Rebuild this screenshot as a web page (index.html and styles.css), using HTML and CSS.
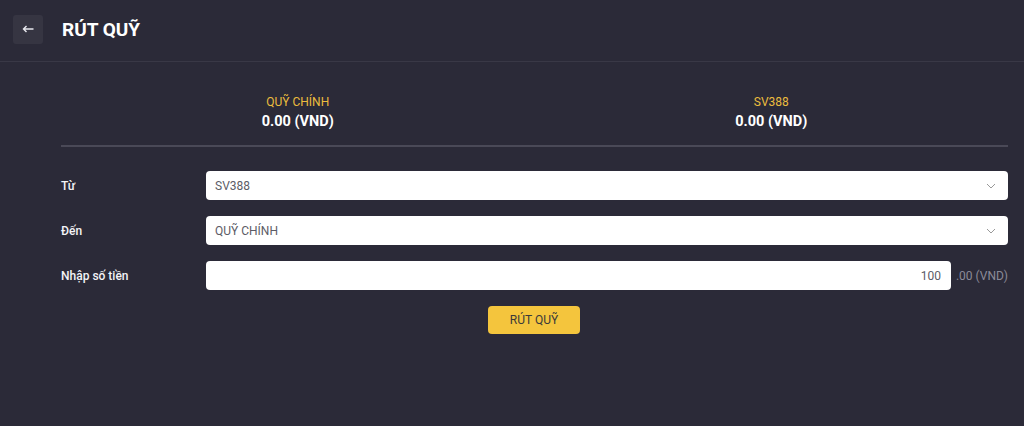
FILE: index.html
```html
<!DOCTYPE html>
<html>
<head>
   <meta charset="UTF-8">
   <title>Rút quỹ</title>
   <link rel="stylesheet" href="styles.css">
</head>
<body>
   <div class="header">
      <button class="back-button">
         <svg width="12" height="8" viewBox="0 0 12 8"><path d="M11.5 4H1.5M4.5 1L1.5 4l3 3" fill="none" stroke="#e8e8ee" stroke-width="1.4"/></svg>
      </button>
      <h1>RÚT QUỸ</h1>
   </div>
   <div class="container">
      <div class="wallets">
         <div class="wallet">
            <div class="wallet-name">QUỸ CHÍNH</div>
            <div class="wallet-amount">0.00 (VND)</div>
         </div>
         <div class="wallet">
            <div class="wallet-name">SV388</div>
            <div class="wallet-amount">0.00 (VND)</div>
         </div>
      </div>
      <div class="form">
         <div class="form-row">
            <label for="tu">Từ</label>
            <div class="select-box" id="tu">
               <span>SV388</span>
               <svg width="10" height="6" viewBox="0 0 10 6"><path d="M1 1l4 4 4-4" fill="none" stroke="#999" stroke-width="1"/></svg>
            </div>
         </div>
         <div class="form-row">
            <label for="den">Đến</label>
            <div class="select-box" id="den">
               <span>QUỸ CHÍNH</span>
               <svg width="10" height="6" viewBox="0 0 10 6"><path d="M1 1l4 4 4-4" fill="none" stroke="#999" stroke-width="1"/></svg>
            </div>
         </div>
         <div class="form-row">
            <label for="so_tien">Nhập số tiền</label>
            <input type="text" id="so_tien" value="100">
            <span class="suffix">.00 (VND)</span>
         </div>
         <div class="submit">
            <button>RÚT QUỸ</button>
         </div>
      </div>
   </div>
</body>
</html>
```

FILE: styles.css
```css
body {
   background-color: #2b2a38;
   margin: 0;
   font-family: Roboto, "Liberation Sans", sans-serif;
   color: #fff;
}
.header {
   display: flex;
   align-items: center;
   gap: 19px;
   height: 62px;
   padding: 0 13px;
   border-bottom: 1px solid #393846;
   box-sizing: border-box;
}
.back-button {
   display: flex;
   align-items: center;
   justify-content: center;
   width: 30px;
   height: 29px;
   flex: none;
   margin-top: -3px;
   border: none;
   border-radius: 3px;
   background-color: #363542;
   padding: 0;
   cursor: pointer;
}
h1 {
   font-size: 19px;
   font-weight: bold;
   margin: -3px 0 0 0;
}
.container {
   padding: 33px 16px 0 61px;
}
.wallets {
   display: flex;
   border-bottom: 2px solid #4a4957;
   padding-bottom: 13px;
}
.wallet {
   flex: 1;
   text-align: center;
}
.wallet-name {
   color: #ebbd3e;
   font-size: 12px;
   line-height: 14px;
}
.wallet-amount {
   font-size: 14.5px;
   font-weight: bold;
   line-height: 20px;
   margin-top: 3px;
}
.form {
   padding-top: 24px;
}
.form-row {
   display: flex;
   align-items: center;
   margin-bottom: 16px;
}
label {
   width: 145px;
   flex: none;
   font-size: 12px;
   font-weight: 500;
   color: #f3f3f6;
}
.select-box {
   flex: 1;
   display: flex;
   align-items: center;
   justify-content: space-between;
   height: 29px;
   padding: 0 12px 0 9px;
   background-color: #fff;
   border-radius: 4px;
   color: #5c5c66;
   font-size: 12px;
}
input[type="text"] {
   flex: 1;
   height: 29px;
   box-sizing: border-box;
   border: none;
   border-radius: 4px;
   padding: 0 10px;
   text-align: right;
   font-family: Roboto, "Liberation Sans", sans-serif;
   font-size: 12px;
   color: #5c5c66;
}
.suffix {
   margin-left: 5px;
   font-size: 12px;
   color: #8b8a98;
}
.submit {
   text-align: center;
   margin-left: -1px;
}
.submit button {
   width: 92px;
   height: 28px;
   border: none;
   border-radius: 4px;
   background-color: #f4c53d;
   color: #3a3a3a;
   font-family: Roboto, "Liberation Sans", sans-serif;
   font-size: 12px;
   cursor: pointer;
}
```
